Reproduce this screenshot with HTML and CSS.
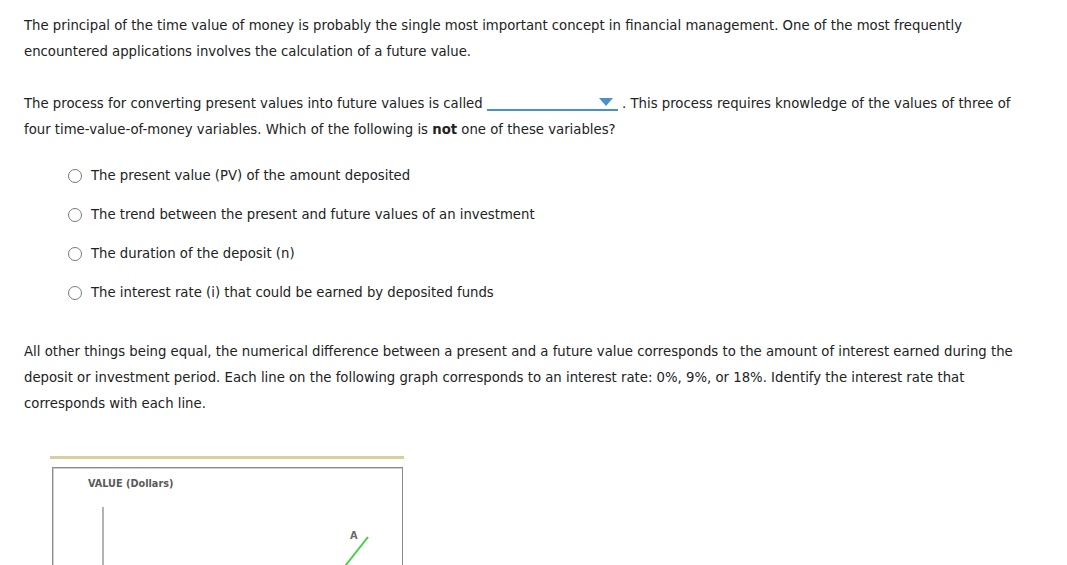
FILE: index.html
```html
<!DOCTYPE html>
<html>
<head>
<meta charset="utf-8">
<link rel="stylesheet" href="styles.css">
</head>
<body>
<div class="page">
  <p class="para">The principal of the time value of money is probably the single most important concept in financial management. One of the most frequently encountered applications involves the calculation of a future value.</p>
  <p class="para">The process for converting present values into future values is called <span class="dropdown"><span class="caret"></span></span> . This process requires knowledge of the values of three of four time-value-of-money variables. Which of the following is <b>not</b> one of these variables?</p>
  <ul class="options">
    <li class="option"><span class="radio"></span>The present value (PV) of the amount deposited</li>
    <li class="option"><span class="radio"></span>The trend between the present and future values of an investment</li>
    <li class="option"><span class="radio"></span>The duration of the deposit (n)</li>
    <li class="option"><span class="radio"></span>The interest rate (i) that could be earned by deposited funds</li>
  </ul>
  <p class="para para3">All other things being equal, the numerical difference between a present and a future value corresponds to the amount of interest earned during the deposit or investment period. Each line on the following graph corresponds to an interest rate: 0%, 9%, or 18%. Identify the interest rate that corresponds with each line.</p>
  <div class="graph">
    <div class="graph-bar"></div>
    <div class="graph-box">
      <svg class="chart" width="350" height="140" viewBox="0 0 350 140">
        <text x="35" y="19" class="axis-label">VALUE (Dollars)</text>
        <line x1="50" y1="39" x2="50" y2="140" stroke="#9a9a9a" stroke-width="1.5"/>
        <line x1="315" y1="69" x2="285" y2="107" stroke="#3fd23f" stroke-width="2"/>
        <text x="297" y="71" class="line-label">A</text>
      </svg>
    </div>
  </div>
</div>
</body>
</html>
```

FILE: styles.css
```css
html, body {
  margin: 0;
  padding: 0;
  background: #ffffff;
}
.page {
  padding: 13px 40px 0 24px;
  font-family: "DejaVu Sans", Verdana, sans-serif;
  font-size: 13.25px;
  line-height: 26px;
  color: #222222;
}
.para {
  margin: 0 0 26px 0;
}
.para b {
  font-weight: bold;
}
.dropdown {
  display: inline-block;
  position: relative;
  width: 131px;
  height: 12px;
  border-bottom: 2px solid #4a90cc;
  vertical-align: -3px;
}
.caret {
  position: absolute;
  right: 5px;
  top: 1px;
  width: 0;
  height: 0;
  border-left: 7px solid transparent;
  border-right: 7px solid transparent;
  border-top: 8px solid #4a90cc;
}
.options {
  list-style: none;
  margin: -6px 0 0 0;
  padding: 0 0 0 44px;
}
.option {
  display: flex;
  align-items: center;
  height: 26px;
  margin-bottom: 13px;
}
.radio {
  display: inline-block;
  width: 14px;
  height: 14px;
  border: 1px solid #7a7a7a;
  border-radius: 50%;
  margin-right: 9px;
  box-sizing: border-box;
  flex: none;
}
.para3 {
  margin-top: 33px;
  margin-bottom: 39px;
}
.graph {
  width: 354px;
  margin-left: 26px;
}
.graph-bar {
  height: 3px;
  background: #dad09f;
}
.graph-box {
  margin: 8px 0 0 2px;
  width: 349px;
  height: 140px;
  border: 1px solid #8a8a8a;
  border-bottom: none;
  box-shadow: inset 1px 1px 0 #d0d0d0;
}
.chart {
  display: block;
}
.axis-label {
  font-family: "DejaVu Sans Condensed", "DejaVu Sans", sans-serif;
  font-weight: bold;
  font-size: 10.8px;
  fill: #5a5a5a;
}
.line-label {
  font-family: "DejaVu Sans Condensed", "DejaVu Sans", sans-serif;
  font-weight: bold;
  font-size: 11px;
  fill: #6a6a6a;
}
```
